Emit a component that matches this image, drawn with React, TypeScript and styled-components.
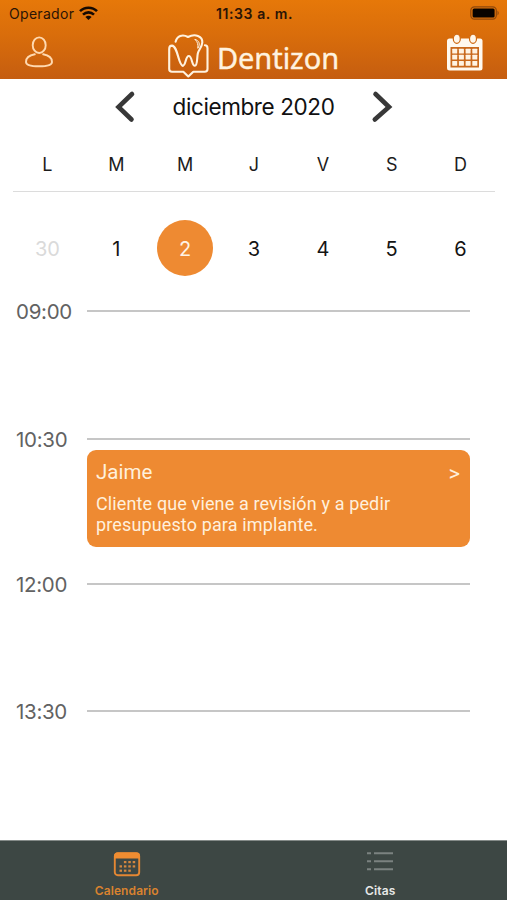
import React from 'react';
import styled, { createGlobalStyle } from 'styled-components';

const GlobalStyle = createGlobalStyle`
  * { box-sizing: border-box; }
  body { margin: 0; background: #fff; font-family: Inter, "Liberation Sans", sans-serif; }
  button { border: 0; padding: 0; background: none; font: inherit; color: inherit; display: block; }
  svg { display: block; }
`;

const Screen = styled.div`
  width: 507px;
  height: 900px;
  display: flex;
  flex-direction: column;
  background: #fff;
  overflow: hidden;
`;

const Header = styled.header`
  height: 79px;
  flex: none;
  background: linear-gradient(#e67809 0%, #d96d0b 45%, #c55d10 100%);
`;

const StatusBar = styled.div`
  height: 28px;
  display: grid;
  grid-template-columns: 1fr auto 1fr;
  align-items: center;
  padding: 0 7px 0 9px;
  color: #2a1405;
`;

const Carrier = styled.div`
  display: flex;
  align-items: center;
  gap: 5px;
  margin-top: -2px;
  font-size: 14px;
  letter-spacing: 0.3px;
`;

const Clock = styled.div`
  margin-top: -1px;
  font-size: 14px;
  font-weight: 600;
  letter-spacing: 0.6px;
`;

const Battery = styled.svg`
  justify-self: end;
  margin-top: -2px;
`;

const Toolbar = styled.div`
  height: 51px;
  display: grid;
  grid-template-columns: 1fr auto 1fr;
  align-items: start;
  padding: 5px 24px 0;
`;

const Brand = styled.div`
  display: flex;
  gap: 7px;
`;

const BrandName = styled.span`
  font-family: "Noto Sans", "Open Sans", sans-serif;
  font-size: 29px;
  font-weight: 400;
  -webkit-text-stroke: 0.4px #fff2df;
  line-height: 40px;
  padding-top: 5px;
  letter-spacing: -0.05px;
  color: #fff2df;
`;

const ToolButton = styled.button<{ $end?: boolean }>`
  justify-self: ${(p) => (p.$end ? 'end' : 'start')};
`;

const MonthBar = styled.div`
  height: 55px;
  flex: none;
  display: flex;
  justify-content: space-between;
  align-items: flex-start;
  padding: 10px 114px 0;
`;

const MonthName = styled.h1`
  margin: 0;
  font-size: 22.5px;
  font-weight: 400;
  line-height: 35px;
  letter-spacing: -0.4px;
  color: #111;
`;

const Week = styled.div`
  flex: none;
  margin: 0 12px 0 13px;
  display: grid;
  grid-template-columns: repeat(7, 1fr);
  justify-items: center;
  align-items: center;
`;

const WeekNames = styled(Week)`
  height: 58px;
  padding-top: 3px;
  border-bottom: 1px solid #dcdcdc;
  font-size: 18px;
  color: #1c1c1c;
`;

const WeekDays = styled(Week)`
  height: 105px;
  padding-top: 7px;
`;

const Day = styled.button<{ $selected?: boolean; $muted?: boolean }>`
  width: 56px;
  height: 56px;
  padding-top: 1px;
  border-radius: 50%;
  font-size: 20px;
  background: ${(p) => (p.$selected ? '#ee8a32' : 'transparent')};
  color: ${(p) => (p.$selected ? '#fff3e4' : p.$muted ? '#dadada' : '#141414')};
`;

const Agenda = styled.main`
  flex: 1;
`;

const Slot = styled.section<{ $height: number }>`
  height: ${(p) => p.$height}px;
  padding: 0 37px 0 16px;
`;

const SlotHead = styled.div`
  height: 28px;
  display: flex;
  align-items: center;
`;

const Hour = styled.span`
  width: 71px;
  padding-top: 1px;
  font-size: 20.5px;
  letter-spacing: -0.3px;
  color: #626262;
`;

const Rule = styled.span`
  flex: 1;
  height: 2px;
  background: #c6c6c6;
`;

const Appointment = styled.article`
  height: 97px;
  margin: -3px 0 0 71px;
  padding: 9px 10px 0 9px;
  border-radius: 9px;
  background: #ee8a32;
  color: #fff0dc;
  font-family: Roboto, sans-serif;
`;

const AppointmentHead = styled.div`
  display: flex;
  justify-content: space-between;
  font-size: 20.5px;
  line-height: 26px;
`;

const More = styled.span`
  padding-top: 2px;
  font-size: 22px;
`;

const Note = styled.p`
  margin: 6px 0 0;
  width: 310px;
  font-size: 18px;
  letter-spacing: 0.13px;
  line-height: 21px;
`;

const TabBar = styled.nav`
  height: 60px;
  flex: none;
  display: grid;
  grid-template-columns: 1fr 1fr;
  background: #3d4744;
  border-top: 1px solid #858b89;
`;

const Tab = styled.button<{ $active?: boolean }>`
  display: flex;
  flex-direction: column;
  align-items: center;
  padding-top: 8px;
  gap: 4px;
  font-size: 12px;
  font-weight: 600;
  letter-spacing: 0.1px;
  line-height: 18px;
  color: ${(p) => (p.$active ? '#d9822f' : '#e6e8e7')};
`;

const WifiIcon = () => (
  <svg width="19" height="15" viewBox="0 0 19 15" fill="none" stroke="#160a02" strokeWidth="2.6">
    <path d="M1 5.2C5.6.6 13.4.6 18 5.2" />
    <path d="M4 8.6c3.200-3 7.800-3 11 0" />
    <path d="M9.500 14 6.400 10.900c1.700-1.500 4.500-1.500 6.200 0z" fill="#160a02" stroke="none" />
  </svg>
);

const BatteryIcon = () => (
  <Battery width="30" height="14" viewBox="0 0 30 14">
    <rect x="0.8" y="0.8" width="25.500" height="12.400" rx="3.600" fill="none" stroke="#8f480c" strokeWidth="1.200" />
    <rect x="2.600" y="2.600" width="22" height="9" rx="1.500" fill="#080300" />
    <path d="M27.500 4.500q2.500 2.500 0 5z" fill="#8f480c" />
  </Battery>
);

const PersonIcon = () => (
  <svg width="30" height="36" viewBox="0 0 30 36" fill="none" stroke="#ffd9b0" strokeWidth="1.900" strokeLinecap="round">
    <ellipse cx="15.200" cy="12.200" rx="6.500" ry="7.800" />
    <path d="M10.800 21.300C5 22.300 2 24.500 2 29c0 3 5 4.300 13 4.300s13-1.300 13-4.300c0-4.500-3-6.700-8.800-7.700" />
  </svg>
);

const ToothLogo = () => (
  <svg width="42" height="46" viewBox="0 0 42 46" fill="none" stroke="#fff2df" strokeWidth="2.100" strokeLinecap="round" strokeLinejoin="round">
    <path d="M14.800 32.700C10.500 32.700 9.800 13 4 12.600 2.200 12.600 1.200 14 1.200 16V36q0 2.700 2.800 2.700h11.300l5 4.800 5-4.800H36.700q2.800 0 2.800-2.700V15.200c0-2-.9-3-2.600-3" />
    <path d="M7.600 8.800C9 2.800 14.500.8 20 4 27 .3 34.800 3 34.300 9.500 34 14.500 30.700 16.500 29.800 20.500 28.900 25 29.500 32.700 26.900 32.700c-3.400 0-2.600-9.700-6.100-9.700s-2.800 9.700-6 9.700" />
    <path d="M27.200 6.500c4 .8 5.500 5 2.600 8.800.4-3.500 0-6.300-2.600-8.800z" strokeWidth="1" />
  </svg>
);

const CalendarIcon = () => (
  <svg width="36" height="38" viewBox="0 0 36 38">
    <rect x="0" y="5.500" width="35.500" height="32" rx="2.500" fill="#fff9ef" />
    {[9.800, 26].map((x) => (
      <ellipse key={x} cx={x} cy="5.700" rx="3.500" ry="4.600" fill="#fff6e8" stroke="#cf680f" strokeWidth="1.200" />
    ))}
    <rect x="3.500" y="14" width="28.500" height="20.500" fill="#c9691c" />
    {[0, 1, 2].map((r) =>
      [0, 1, 2, 3].map((c) => (
        <rect key={`${r}-${c}`} x={5.200 + c * 6.700} y={15.700 + r * 6.100} width="5" height="4.800" rx="0.500" fill="#fff3e2" />
      )),
    )}
  </svg>
);

const Chevron = ({ next }: { next?: boolean }) => (
  <svg width="22" height="34" viewBox="0 0 22 34" fill="none" stroke="#383838" strokeWidth="4.600" strokeLinecap="round">
    <path d={next ? 'M4.500 4 18 17 3.800 29.500' : 'M18 4 4.500 17 17.500 29.500'} />
  </svg>
);

const Arrow = styled.button`
  margin-top: 1px;
`;

const dots = [[1, 0], [2, 0], [3, 0], [0, 1], [1, 1], [2, 1], [3, 1], [0, 2], [1, 2], [2, 2]];

const TabCalendarIcon = () => (
  <svg width="28" height="29" viewBox="0 0 28 29">
    <rect x="1.800" y="4.300" width="24.400" height="21.900" rx="3" fill="none" stroke="#e48733" strokeWidth="1.900" />
    <path d="M1 9.500V7q0-3.600 3.600-3.600h18.800Q27 3.400 27 7v2.500z" fill="#ef8c31" />
    {dots.map(([c, r]) => (
      <rect key={`${c}-${r}`} x={6.500 + c * 4.400} y={12 + r * 4.300} width="2.500" height="2.200" fill="#d4873f" />
    ))}
  </svg>
);

const ListIcon = () => (
  <svg width="28" height="29" viewBox="0 0 28 29" stroke="#7b8280" strokeWidth="1.900">
    <path d="M1 4.300h4M8 4.300h19M1 12.300h4M8 12.300h19M1 20.300h4M8 20.300h19" />
  </svg>
);

const weekNames = ['L', 'M', 'M', 'J', 'V', 'S', 'D'];
const weekDays = [30, 1, 2, 3, 4, 5, 6];
const slots = [
  { hour: '09:00', height: 128 },
  { hour: '10:30', height: 145, name: 'Jaime', note: 'Cliente que viene a revisión y a pedir presupuesto para implante.' },
  { hour: '12:00', height: 127 },
  { hour: '13:30', height: 128 },
];

export default function App() {
  return (
    <Screen>
      <GlobalStyle />
      <Header>
        <StatusBar>
          <Carrier>Operador <WifiIcon /></Carrier>
          <Clock>11:33 a. m.</Clock>
          <BatteryIcon />
        </StatusBar>
        <Toolbar>
          <ToolButton aria-label="Perfil"><PersonIcon /></ToolButton>
          <Brand>
            <ToothLogo />
            <BrandName>Dentizon</BrandName>
          </Brand>
          <ToolButton $end aria-label="Hoy"><CalendarIcon /></ToolButton>
        </Toolbar>
      </Header>
      <MonthBar>
        <Arrow aria-label="Mes anterior"><Chevron /></Arrow>
        <MonthName>diciembre 2020</MonthName>
        <Arrow aria-label="Mes siguiente"><Chevron next /></Arrow>
      </MonthBar>
      <WeekNames>
        {weekNames.map((n, i) => <span key={i}>{n}</span>)}
      </WeekNames>
      <WeekDays>
        {weekDays.map((d) => <Day key={d} $selected={d === 2} $muted={d === 30}>{d}</Day>)}
      </WeekDays>
      <Agenda>
        {slots.map((s) => (
          <Slot key={s.hour} $height={s.height}>
            <SlotHead>
              <Hour>{s.hour}</Hour>
              <Rule />
            </SlotHead>
            {s.name && (
              <Appointment>
                <AppointmentHead>
                  <span>{s.name}</span>
                  <More>&gt;</More>
                </AppointmentHead>
                <Note>{s.note}</Note>
              </Appointment>
            )}
          </Slot>
        ))}
      </Agenda>
      <TabBar>
        <Tab $active><TabCalendarIcon />Calendario</Tab>
        <Tab><ListIcon />Citas</Tab>
      </TabBar>
    </Screen>
  );
}
